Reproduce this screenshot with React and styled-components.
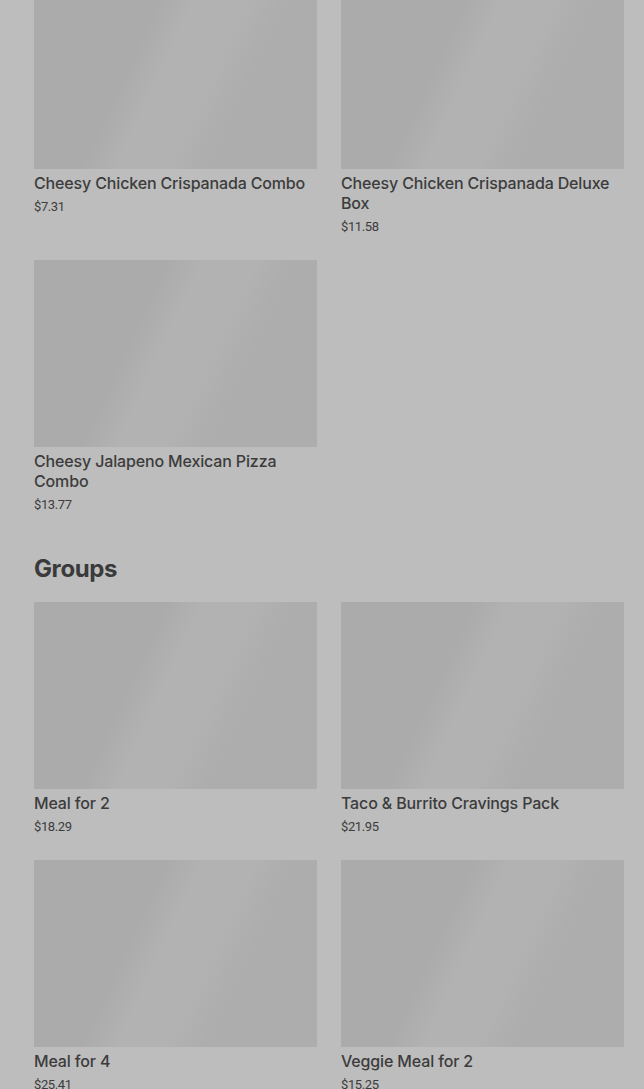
import styled, { createGlobalStyle } from 'styled-components';

const GlobalStyle = createGlobalStyle`
    html, body {
        margin: 0;
        padding: 0;
        background: #bdbdbd;
        overflow: hidden;
    }
    * {
        box-sizing: border-box;
    }
`;

const sections = [
    {
        title: null,
        items: [
            { name: "Cheesy Chicken Crispanada Combo", price: "$7.31" },
            { name: "Cheesy Chicken Crispanada Deluxe Box", price: "$11.58" },
            { name: "Cheesy Jalapeno Mexican Pizza Combo", price: "$13.77" },
        ],
    },
    {
        title: "Groups",
        items: [
            { name: "Meal for 2", price: "$18.29" },
            { name: "Taco & Burrito Cravings Pack", price: "$21.95" },
            { name: "Meal for 4", price: "$25.41" },
            { name: "Veggie Meal for 2", price: "$15.25" },
        ],
    },
];

export default function App() {
    return (
        <>
            <GlobalStyle />
            <Page>
                {sections.map((section, i) => (
                    <Section key={i}>
                        {section.title && <Heading>{section.title}</Heading>}
                        <Grid>
                            {section.items.map(item => (
                                <Card key={item.name}>
                                    <Thumb />
                                    <Name>{item.name}</Name>
                                    <Price>{item.price}</Price>
                                </Card>
                            ))}
                        </Grid>
                    </Section>
                ))}
            </Page>
        </>
    )
}

/* --- STYLES --- */
const Page = styled.div`
    padding: 0 20px 0 34px;
    margin-top: -18px;
    display: flex;
    flex-direction: column;
    gap: 40px;
`;
const Section = styled.section`
    display: flex;
    flex-direction: column;
`;
const Heading = styled.h2`
    margin: 0 0 18px;
    font-family: Inter, "Liberation Sans", sans-serif;
    font-weight: 700;
    font-size: 24px;
    line-height: 30px;
    letter-spacing: -0.4px;
    color: #3a3a3a;
`;
const Grid = styled.div`
    display: grid;
    grid-template-columns: 283px 283px;
    column-gap: 24px;
    row-gap: 24px;
    align-items: start;
`;
const Card = styled.div`
    display: flex;
    flex-direction: column;
`;
const Thumb = styled.div`
    height: 187px;
    background: linear-gradient(115deg, #ababab 36%, #b2b2b2 46%, #b2b2b2 60%, #adadad 70%);
    margin-bottom: 4px;
`;
const Name = styled.div`
    font-family: Inter, "Liberation Sans", sans-serif;
    font-weight: 500;
    font-size: 16px;
    line-height: 20px;
    letter-spacing: -0.15px;
    color: #3c3c3c;
`;
const Price = styled.div`
    margin-top: 5px;
    font-family: Roboto, "Liberation Sans", sans-serif;
    font-size: 13px;
    line-height: 18px;
    letter-spacing: -0.4px;
    color: #3c3c3c;
`;
